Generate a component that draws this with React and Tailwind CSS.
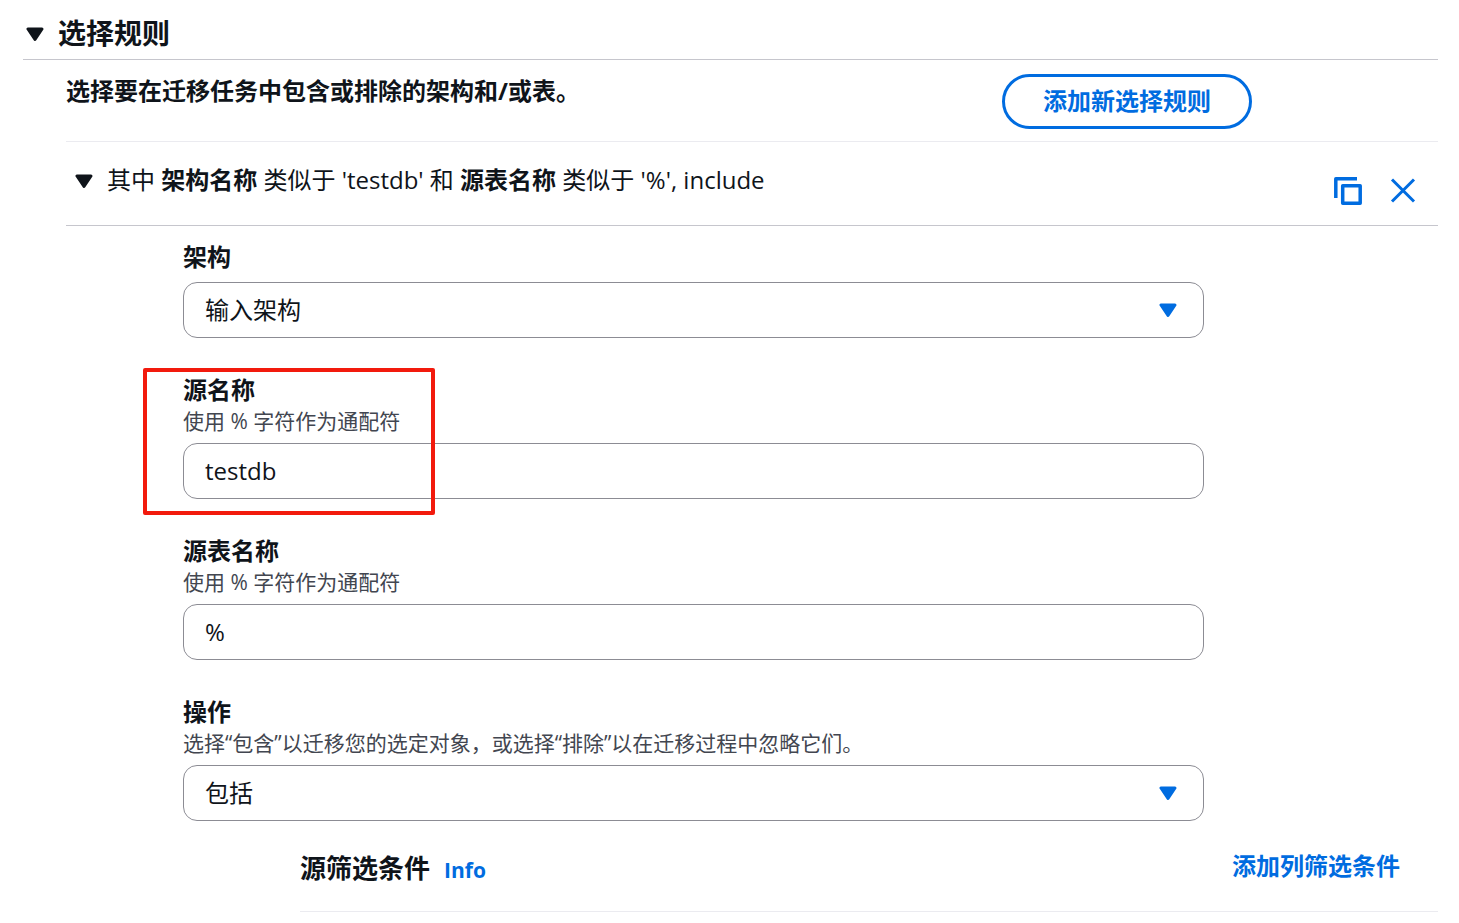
import { useState } from 'react'

function Caret({ className }) {
  return (
    <svg className={className} width="18" height="16" viewBox="0 0 18 16" fill="currentColor" stroke="currentColor" strokeWidth="3" strokeLinejoin="round" aria-hidden="true">
      <path d="M2 3h14L9 13.5z" />
    </svg>
  )
}

function Field({ id, label, hint, highlight, children }) {
  return (
    <div className="relative">
      <label htmlFor={id} className="block w-fit font-bold leading-[35px]">{label}</label>
      {hint && <p id={`${id}-hint`} className="text-[21px] leading-7 text-[#424650]">{hint}</p>}
      <div className="mt-2">{children}</div>
      {highlight && (
        <div className="absolute -left-10 -top-1 -bottom-4 w-[292px] border-4 border-[#f21a0d] rounded-xs pointer-events-none" />
      )}
    </div>
  )
}

function SelectBox({ id, options, ...props }) {
  return (
    <div className="relative">
      <select id={id} className="block w-full h-14 appearance-none rounded-[14px] border border-[#8c8c94] bg-white pl-[21px] pr-16" {...props}>
        {options.map((option) => (
          <option key={option}>{option}</option>
        ))}
      </select>
      <Caret className="absolute right-[27px] top-5 text-[#006ce0] pointer-events-none" />
    </div>
  )
}

function TextBox({ id, value, onChange }) {
  return (
    <input
      id={id}
      type="text"
      value={value}
      onChange={(e) => onChange(e.target.value)}
      aria-describedby={`${id}-hint`}
      className="block w-full h-14 rounded-[14px] border border-[#8c8c94] bg-white px-[21px] pb-0.5"
    />
  )
}

export default function App() {
  const [schemaName, setSchemaName] = useState('testdb')
  const [tableName, setTableName] = useState('%')

  return (
    <main lang="zh-CN" className="bg-white pl-[23px] pr-[21px] text-2xl text-[#0f141a] font-['Open_Sans','Noto_Sans_CJK_SC',sans-serif]">
      {/* Section header */}
      <h2 className="border-b border-[#c6c6cd] pt-4 pb-2 text-[28px] leading-[35px] font-bold">
        <button type="button" aria-expanded="true" className="flex items-center gap-3.5 pl-[3px]">
          <Caret />
          选择规则
        </button>
      </h2>

      <div className="pl-[43px]">
        <div className="grid grid-cols-12 gap-8 items-start border-b border-[#ebebf0] pt-3.5 pb-3">
          <p className="col-span-8 font-bold leading-[33px]">选择要在迁移任务中包含或排除的架构和/或表。</p>
          <button type="button" className="col-span-4 justify-self-start h-[55px] rounded-full border-3 border-[#006ce0] px-[38px] pb-0.5 font-bold text-[#006ce0] whitespace-nowrap">
            添加新选择规则
          </button>
        </div>

        {/* Rule summary */}
        <div className="flex items-start justify-between border-b border-[#c6c6cd] pt-[21px] pb-[7px]">
          <button type="button" aria-expanded="true" className="flex items-center gap-3.5 pl-[9px] leading-[35px] text-left">
            <Caret />
            <span className="pb-0.5 leading-[33px]">
              其中 <b>架构名称</b> 类似于 'testdb' 和 <b>源表名称</b> 类似于 '%', include
            </span>
          </button>
          <div className="flex h-[55px] items-center gap-[27px] pr-[22px] text-[#006ce0]">
            <button type="button" aria-label="复制">
              <svg width="29" height="28" viewBox="0 0 29 28" fill="none" stroke="currentColor" strokeWidth="3.5" strokeLinejoin="round">
                <path d="M8.7 8.7h17.5v17.5H8.7z" />
                <path d="M1.8 21V1.8H23" />
              </svg>
            </button>
            <button type="button" aria-label="删除">
              <svg width="26" height="28" viewBox="0 0 26 28" fill="none" stroke="currentColor" strokeWidth="3">
                <path d="M2 2.5l22 22M24 2.5l-22 22" />
              </svg>
            </button>
          </div>
        </div>

        {/* Rule fields */}
        <div className="grid grid-cols-12 gap-x-8 pt-[13px]">
          <div className="col-start-2 col-span-9 flex flex-col gap-[34px]">
            <Field id="schema" label="架构">
              <SelectBox id="schema" options={['输入架构']} />
            </Field>
            <Field id="source-name" label="源名称" hint="使用 % 字符作为通配符" highlight>
              <TextBox id="source-name" value={schemaName} onChange={setSchemaName} />
            </Field>
            <Field id="table-name" label="源表名称" hint="使用 % 字符作为通配符">
              <TextBox id="table-name" value={tableName} onChange={setTableName} />
            </Field>
            <Field id="action" label="操作" hint="选择“包含”以迁移您的选定对象，或选择“排除”以在迁移过程中忽略它们。">
              <SelectBox id="action" options={['包括', '排除']} aria-describedby="action-hint" />
            </Field>
          </div>

          {/* Source filters */}
          <div className="col-start-3 col-span-10 flex items-start justify-between border-b border-[#ebebf0] pt-[18px] pb-[17px]">
            <div className="flex items-baseline gap-3.5 pt-3">
              <h3 className="text-[26px] leading-[35px] font-bold">源筛选条件</h3>
              <a href="#info" className="text-[21px] leading-7 font-bold text-[#006ce0]">Info</a>
            </div>
            <button type="button" className="h-[55px] pr-[38px] pb-0.5 font-bold text-[#006ce0]">添加列筛选条件</button>
          </div>
        </div>
      </div>
    </main>
  )
}
